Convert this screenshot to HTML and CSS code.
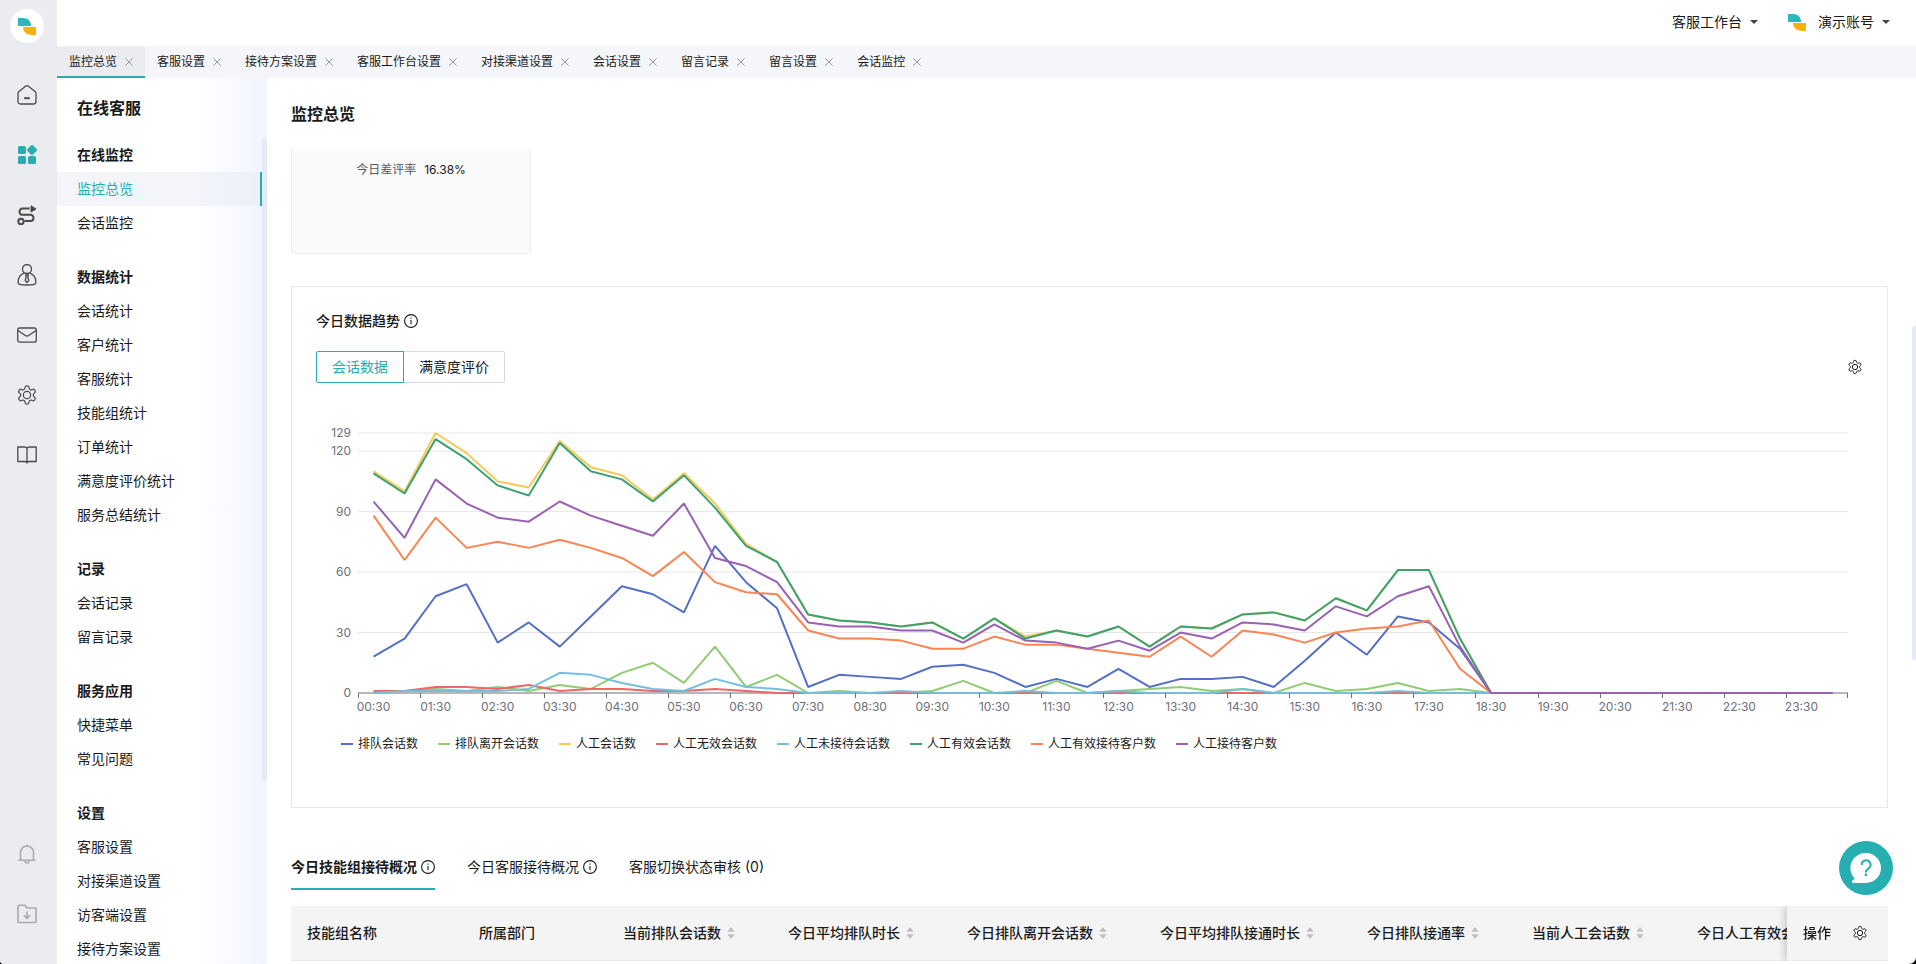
FILE: index.html
```html
<!DOCTYPE html>
<html lang="zh-CN">
<head>
<meta charset="utf-8">
<meta name="viewport" content="width=device-width, initial-scale=1">
<title>监控总览</title>
<link rel="stylesheet" href="styles.css">
</head>
<body>
<svg class="defs" aria-hidden="true">
  <symbol id="logo" viewBox="0 0 18 17"><path d="M0 0h5c5 0 8 3 8 8C11 8 9 8 7 8H0z" fill="#2bb8bb"/><path d="M5 9h13v8h-4c-5 0-9-3-9-8z" fill="#ffae0a"/></symbol>
  <symbol id="gear" viewBox="0 0 24 24"><path d="M12.22 2h-.44a2 2 0 0 0-2 2v.18a2 2 0 0 1-1 1.73l-.43.25a2 2 0 0 1-2 0l-.15-.08a2 2 0 0 0-2.73.73l-.22.38a2 2 0 0 0 .73 2.73l.15.1a2 2 0 0 1 1 1.72v.51a2 2 0 0 1-1 1.74l-.15.09a2 2 0 0 0-.73 2.73l.22.38a2 2 0 0 0 2.73.73l.15-.08a2 2 0 0 1 2 0l.43.25a2 2 0 0 1 1 1.73V20a2 2 0 0 0 2 2h.44a2 2 0 0 0 2-2v-.18a2 2 0 0 1 1-1.73l.43-.25a2 2 0 0 1 2 0l.15.08a2 2 0 0 0 2.73-.73l.22-.39a2 2 0 0 0-.73-2.73l-.15-.08a2 2 0 0 1-1-1.74v-.5a2 2 0 0 1 1-1.74l.15-.09a2 2 0 0 0 .73-2.73l-.22-.38a2 2 0 0 0-2.73-.73l-.15.08a2 2 0 0 1-2 0l-.43-.25a2 2 0 0 1-1-1.73V4a2 2 0 0 0-2-2z"/><circle cx="12" cy="12" r="4"/></symbol>
  <symbol id="info" viewBox="0 0 14 14"><circle cx="7" cy="7" r="6.4"/><path d="M7 6v4.2M7 3.6v1.2"/></symbol>
  <symbol id="close" viewBox="0 0 8 8"><path d="M.3.3l7.400 7.400M7.700.3L.3 7.700"/></symbol>
  <symbol id="sort" viewBox="0 0 8 12"><path d="M4 0l3.700 4.800H.3zM4 12l3.700-4.800H.3z"/></symbol>
  <symbol id="caret" viewBox="0 0 8 4"><path d="M0 0h8L4 4z"/></symbol>
</svg>

<div class="app">
  <nav class="rail" aria-label="主导航">
    <a class="rail-logo" href="#" aria-label="首页"><svg class="logo"><use href="#logo"/></svg></a>
    <a class="rail-link" href="#" aria-label="主页"><svg class="icon" viewBox="0 0 20 20"><path d="M1 8.500Q1 7.200 2 6.500L8.800 1.100Q10 .3 11.200 1.100L18 6.500Q19 7.200 19 8.500V16.500Q19 19 16.500 19H3.500Q1 19 1 16.500z"/><path d="M7.200 13.200h5.600" class="thick"/></svg></a>
    <a class="rail-link active" href="#" aria-label="应用"><svg class="icon solid" viewBox="0 0 20 20"><rect x="1" y="1" width="8" height="8" rx="1.500"/><rect x="1" y="11" width="8" height="8" rx="1.500"/><rect x="11" y="11" width="8" height="8" rx="1.500"/><rect x="11" y="1" width="8" height="8" rx="1.500" transform="rotate(45 15 5)"/></svg></a>
    <a class="rail-link" href="#" aria-label="流程"><svg class="icon heavy" viewBox="0 0 20 20"><path d="M12.500 3.600H5.500a3 3 0 0 0-3 3.200 3 3 0 0 0 3 3H13.500a3 3 0 0 1 3 3.200 3 3 0 0 1-3 3H7.700"/><circle cx="4" cy="16.500" r="2.700"/><path d="M14 .8l5 3.200-5 3z" class="fill"/></svg></a>
    <a class="rail-link" href="#" aria-label="客户"><svg class="icon tall" viewBox="0 0 20 24"><circle cx="10" cy="6" r="4.500"/><path d="M7.300 9.800C3.500 11.500 1.200 15 1.200 18.500v1.700Q2 22 10 22t8.800-1.800V18.500c0-3.500-2.300-7-6.100-8.700M8.600 12h2.800L10.800 14l1 3.500-1.800 2-1.800-2 1-3.500z"/></svg></a>
    <a class="rail-link" href="#" aria-label="邮件"><svg class="icon" viewBox="0 0 20 20"><rect x=".7" y="3" width="18.600" height="14.200" rx="2"/><path d="M1 5.500l7.300 5q1.700 1 3.400 0l7.300-5"/></svg></a>
    <a class="rail-link" href="#" aria-label="设置"><svg class="icon gear"><use href="#gear"/></svg></a>
    <a class="rail-link" href="#" aria-label="知识库"><svg class="icon" viewBox="0 0 20 20"><path d="M10 3.500Q9.500 2 7.500 2H.8v14.500h7Q9.800 16.500 10 18Q10.200 16.500 12.200 16.500h7V2h-6.700Q10.500 2 10 3.500zV18"/></svg></a>
    <a class="rail-link muted push" href="#" aria-label="通知"><svg class="icon" viewBox="0 0 20 20"><path d="M1.500 16.300h17M3.500 16V8.500a6.500 6.500 0 0 1 13 0V16M7.800 17q.5 2 2.200 2t2.200-2M10 .4V2"/></svg></a>
    <a class="rail-link muted last" href="#" aria-label="下载"><svg class="icon" viewBox="0 0 20 20"><path d="M1 18.500V2.500Q1 1.300 2.200 1.300H8l2 2.700h9v14.500zM10 7.500v6.700M6.800 11.200l3.200 3.200 3.200-3.200"/></svg></a>
  </nav>

  <header class="topbar">
    <button class="menu" type="button">客服工作台<svg class="caret"><use href="#caret"/></svg></button>
    <button class="menu" type="button"><svg class="logo"><use href="#logo"/></svg><span>演示账号</span><svg class="caret"><use href="#caret"/></svg></button>
  </header>

  <div class="tabs">
    <div class="tab current"><a href="#">监控总览</a><button type="button" aria-label="关闭"><svg><use href="#close"/></svg></button></div>
    <div class="tab"><a href="#">客服设置</a><button type="button" aria-label="关闭"><svg><use href="#close"/></svg></button></div>
    <div class="tab"><a href="#">接待方案设置</a><button type="button" aria-label="关闭"><svg><use href="#close"/></svg></button></div>
    <div class="tab"><a href="#">客服工作台设置</a><button type="button" aria-label="关闭"><svg><use href="#close"/></svg></button></div>
    <div class="tab"><a href="#">对接渠道设置</a><button type="button" aria-label="关闭"><svg><use href="#close"/></svg></button></div>
    <div class="tab"><a href="#">会话设置</a><button type="button" aria-label="关闭"><svg><use href="#close"/></svg></button></div>
    <div class="tab"><a href="#">留言记录</a><button type="button" aria-label="关闭"><svg><use href="#close"/></svg></button></div>
    <div class="tab"><a href="#">留言设置</a><button type="button" aria-label="关闭"><svg><use href="#close"/></svg></button></div>
    <div class="tab"><a href="#">会话监控</a><button type="button" aria-label="关闭"><svg><use href="#close"/></svg></button></div>
  </div>

  <aside class="side">
    <h2>在线客服</h2>
    <div class="side-groups">
      <section><h3>在线监控</h3><a class="selected" href="#">监控总览</a><a href="#">会话监控</a></section>
      <section><h3>数据统计</h3><a href="#">会话统计</a><a href="#">客户统计</a><a href="#">客服统计</a><a href="#">技能组统计</a><a href="#">订单统计</a><a href="#">满意度评价统计</a><a href="#">服务总结统计</a></section>
      <section><h3>记录</h3><a href="#">会话记录</a><a href="#">留言记录</a></section>
      <section><h3>服务应用</h3><a href="#">快捷菜单</a><a href="#">常见问题</a></section>
      <section><h3>设置</h3><a href="#">客服设置</a><a href="#">对接渠道设置</a><a href="#">访客端设置</a><a href="#">接待方案设置</a></section>
    </div>
    <span class="side-scroll"></span>
  </aside>

  <main class="main">
    <h1>监控总览</h1>
    <div class="stat"><span>今日差评率</span><strong>16.38%</strong></div>

    <section class="panel">
      <h2>今日数据趋势<svg class="info"><use href="#info"/></svg></h2>
      <div class="panel-tools">
        <div class="switch"><button class="on" type="button">会话数据</button><button type="button">满意度评价</button></div>
        <button class="gear-btn" type="button" aria-label="图表设置"><svg><use href="#gear"/></svg></button>
      </div>
      <div class="chart">
        <svg class="y-axis" aria-hidden="true">
          <g text-anchor="end"><text x="35" y="4">129</text><text x="35" y="22">120</text><text x="35" y="83">90</text><text x="35" y="143">60</text><text x="35" y="204">30</text><text x="35" y="264">0</text></g>
        </svg>
        <svg class="plot" viewBox="0 0 48 129" preserveAspectRatio="none" role="img" aria-label="今日数据趋势">
          <g class="grid"><path d="M0 0H48M0 9H48M0 39H48M0 69H48M0 99H48"/></g>
          <path class="axis" d="M0 129H48"/>
          <g class="lines" transform="translate(.5 129) scale(1 -1)">
            <polyline class="c1" points="0,18 1,27 2,48 3,54 4,25 5,35 6,23 7,38 8,53 9,49 10,40 11,73 12,55 13,42 14,3 15,9 16,8 17,7 18,13 19,14 20,10 21,3 22,7 23,3 24,12 25,3 26,7 27,7 28,8 29,3 30,16 31,30 32,19 33,38 34,35 35,22 36,0 47,0"/>
            <polyline class="c2" points="0,0 1,1 2,2 3,1 4,3 5,1 6,4 7,2 8,10 9,15 10,5 11,23 12,3 13,9 14,0 15,1 16,0 17,0 18,1 19,6 20,0 21,0 22,6 23,0 24,1 25,2 26,3 27,1 28,2 29,0 30,5 31,1 32,2 33,5 34,1 35,2 36,0 47,0"/>
            <polyline class="c3" points="0,110 1,100 2,129 3,119 4,105 5,102 6,125 7,112 8,108 9,96 10,109 11,94 12,74 13,65 14,39 15,36 16,35 17,33 18,35 19,27 20,37 21,28 22,31 23,28 24,33 25,23 26,33 27,32 28,39 29,40 30,36 31,47 32,41 33,61 34,61 35,27 36,0 47,0"/>
            <polyline class="c4" points="0,1 1,1 2,3 3,3 4,2 5,4 6,1 7,2 8,2 9,1 10,1 11,2 12,1 13,0 47,0"/>
            <polyline class="c5" points="0,0 1,1 2,1 3,1 4,1 5,2 6,10 7,9 8,5 9,2 10,1 11,7 12,3 13,2 14,0 16,0 17,1 18,0 20,0 21,1 22,0 23,0 24,1 25,0 27,0 28,2 29,0 32,0 33,1 34,0 47,0"/>
            <polyline class="c6" points="0,109 1,99 2,126 3,116 4,103 5,98 6,124 7,110 8,106 9,95 10,108 11,92 12,73 13,65 14,39 15,36 16,35 17,33 18,35 19,27 20,37 21,27 22,31 23,28 24,33 25,23 26,33 27,32 28,39 29,40 30,36 31,47 32,41 33,61 34,61 35,27 36,0 47,0"/>
            <polyline class="c7" points="0,88 1,66 2,87 3,72 4,75 5,72 6,76 7,72 8,67 9,58 10,70 11,55 12,50 13,49 14,31 15,27 16,27 17,26 18,22 19,22 20,28 21,24 22,24 23,22 24,20 25,18 26,28 27,18 28,31 29,29 30,25 31,30 32,32 33,33 34,36 35,12 36,0 47,0"/>
            <polyline class="c8" points="0,95 1,77 2,106 3,94 4,87 5,85 6,95 7,88 8,83 9,78 10,94 11,67 12,63 13,55 14,35 15,33 16,33 17,31 18,31 19,25 20,34 21,26 22,25 23,22 24,26 25,21 26,30 27,27 28,35 29,34 30,31 31,43 32,38 33,48 34,53 35,23 36,0 47,0"/>
          </g>
        </svg>
        <div class="x-axis">
          <div><span>00:30</span></div><div><span>01:30</span></div><div><span>02:30</span></div><div><span>03:30</span></div><div><span>04:30</span></div><div><span>05:30</span></div><div><span>06:30</span></div><div><span>07:30</span></div><div><span>08:30</span></div><div><span>09:30</span></div><div><span>10:30</span></div><div><span>11:30</span></div><div><span>12:30</span></div><div><span>13:30</span></div><div><span>14:30</span></div><div><span>15:30</span></div><div><span>16:30</span></div><div><span>17:30</span></div><div><span>18:30</span></div><div><span>19:30</span></div><div><span>20:30</span></div><div><span>21:30</span></div><div><span>22:30</span></div><div><span>23:30</span></div>
        </div>
      </div>
      <ul class="legend">
        <li class="c1">排队会话数</li><li class="c2">排队离开会话数</li><li class="c3">人工会话数</li><li class="c4">人工无效会话数</li><li class="c5">人工未接待会话数</li><li class="c6">人工有效会话数</li><li class="c7">人工有效接待客户数</li><li class="c8">人工接待客户数</li>
      </ul>
    </section>

    <div class="subtabs">
      <button class="on" type="button">今日技能组接待概况<svg class="info"><use href="#info"/></svg></button>
      <button type="button">今日客服接待概况<svg class="info"><use href="#info"/></svg></button>
      <button type="button">客服切换状态审核 (0)</button>
    </div>
    <div class="table-wrap">
      <table>
        <thead>
          <tr>
            <th class="name">技能组名称</th>
            <th class="dept">所属部门</th>
            <th>当前排队会话数<svg class="sort"><use href="#sort"/></svg></th>
            <th>今日平均排队时长<svg class="sort"><use href="#sort"/></svg></th>
            <th>今日排队离开会话数<svg class="sort"><use href="#sort"/></svg></th>
            <th>今日平均排队接通时长<svg class="sort"><use href="#sort"/></svg></th>
            <th>今日排队接通率<svg class="sort"><use href="#sort"/></svg></th>
            <th>当前人工会话数<svg class="sort"><use href="#sort"/></svg></th>
            <th>今日人工有效会话数<svg class="sort"><use href="#sort"/></svg></th>
            <th class="ops"><div>操作<button class="gear-btn" type="button" aria-label="列设置"><svg><use href="#gear"/></svg></button></div></th>
          </tr>
        </thead>
      </table>
    </div>
    <span class="page-scroll"></span>
  </main>

  <button class="help" type="button" aria-label="帮助"><svg viewBox="0 0 54 54"><path d="M27 12a15 15 0 1 1 0 30H13.500q-1.200-.8-.3-2l2.300-2.600A15 15 0 0 1 27 12z" fill="#fff"/><path d="M22.700 24a4.400 4.400 0 1 1 6.800 3.400q-2.600 1.700-2.600 4" fill="none" stroke="#27aeb0" stroke-width="2"/><circle cx="26.900" cy="33.900" r="1.400" fill="#27aeb0"/></svg></button>
</div>
</body>
</html>
```

FILE: styles.css
```css
:root {
  --teal: #27aeb0;
  --ink: #1a1a1a;
  --line: #e8e8e8;
}

* {
  box-sizing: border-box;
}

html {
  background: #000;
}

body {
  margin: 0;
  color: var(--ink);
  font: 14px/20px Inter, "Noto Sans CJK SC", sans-serif;
}

h1, h2, h3, ul {
  margin: 0;
  padding: 0;
}

a {
  color: inherit;
  text-decoration: none;
}

button {
  padding: 0;
  border: 0;
  background: none;
  color: inherit;
  font: inherit;
  cursor: pointer;
}

svg {
  flex: none;
}

.defs {
  position: absolute;
  width: 0;
  height: 0;
}

.app {
  display: grid;
  grid-template: 46px 32px minmax(0, 1fr) / 57px 210px minmax(0, 1fr);
  height: 100vh;
  overflow: hidden;
  border-radius: 0 0 7px 4px;
  background: #fff;
}

.logo {
  width: 18px;
  height: 17px;
}

/* Icon rail */
.rail {
  grid-row: 1 / -1;
  display: flex;
  flex-direction: column;
  align-items: center;
  padding: 9px 3px 20px 0;
  background: #ebecf0;
}

.rail-logo {
  display: grid;
  place-items: center;
  width: 34px;
  height: 34px;
  margin-bottom: 22px;
  border-radius: 50%;
  background: #fff;
}

.rail-link {
  display: grid;
  place-items: center;
  width: 54px;
  height: 60px;
  color: #4a4a4a;
}

.rail-link.active {
  color: var(--teal);
}

.rail-link.muted {
  color: #a8abb0;
}

.rail-link.push {
  margin-top: auto;
}

.icon {
  width: 20px;
  height: 20px;
  fill: none;
  stroke: currentColor;
  stroke-width: 1.3;
  stroke-linejoin: round;
}

.muted .icon {
  stroke-width: 1.6;
}

.icon.tall {
  height: 24px;
}

.icon.gear {
  width: 22px;
  height: 22px;
}

.icon.heavy {
  stroke-width: 2;
}

.icon .thick {
  stroke-width: 2;
}

.icon.solid {
  fill: currentColor;
  stroke: none;
}

.icon .fill {
  fill: currentColor;
  stroke-width: 1;
}

/* Top bar */
.topbar {
  grid-column: 2 / -1;
  display: flex;
  justify-content: flex-end;
  gap: 30px;
  padding: 0 26px 2px;
}

.menu {
  display: flex;
  align-items: center;
  gap: 8px;
}

.menu .logo {
  margin-right: 4px;
}

.caret {
  width: 8px;
  height: 4px;
  fill: #444;
}

/* Open pages */
.tabs {
  grid-column: 2 / -1;
  display: flex;
  border-top: 1px solid #eef1f5;
  background: #f4f6f9;
  font-size: 12px;
}

.tab {
  display: flex;
  align-items: center;
  gap: 8px;
  padding: 0 12px;
  border-bottom: 2px solid transparent;
}

.tab.current {
  border-color: var(--teal);
  background: #ebecf0;
}

.tab button {
  display: flex;
}

.tab svg {
  width: 8px;
  height: 8px;
  stroke: #999;
}

/* Section menu */
.side {
  position: relative;
  overflow: hidden;
  padding-top: 20px;
  background: linear-gradient(90deg, #fff 66%, #f2f5ff);
}

.side h2 {
  padding: 0 20px;
  font-size: 16px;
  font-weight: 600;
  line-height: 20px;
}

.side-groups {
  display: flex;
  flex-direction: column;
  gap: 20px;
  padding: 20px 5px 0 0;
}

.side section {
  display: flex;
  flex-direction: column;
}

.side h3,
.side section a {
  padding: 0 20px;
  font-size: 14px;
  line-height: 34px;
}

.side h3 {
  font-weight: 600;
}

.side .selected {
  border-right: 2px solid var(--teal);
  background: rgba(226, 230, 240, .4);
  color: var(--teal);
}

.side-scroll {
  position: absolute;
  top: 60px;
  right: 0;
  width: 5px;
  height: 643px;
  border-radius: 3px;
  background: #e4e9f6;
}

/* Content */
.main {
  position: relative;
  overflow: hidden;
  padding: 24px 28px 0 24px;
}

h1 {
  font-size: 16px;
  font-weight: 600;
  line-height: 24px;
}

.stat {
  display: flex;
  justify-content: center;
  gap: 8px;
  width: 240px;
  height: 105px;
  margin-top: 23px;
  padding-top: 11px;
  border: 1px solid #eee;
  border-top: 0;
  border-radius: 0 0 4px 4px;
  background: #fafafa;
  color: #595959;
  font-size: 12px;
}

.stat strong {
  color: var(--ink);
  font-weight: 400;
}

.panel {
  margin-top: 32px;
  padding: 24px 24px 53px;
  border: 1px solid var(--line);
}

.panel h2 {
  display: flex;
  align-items: center;
  gap: 4px;
  font-size: 14px;
  font-weight: 500;
}

.info {
  width: 14px;
  height: 14px;
  fill: none;
  stroke: var(--ink);
  stroke-width: 1.1;
}

.panel-tools {
  display: flex;
  justify-content: space-between;
  align-items: center;
  margin-top: 20px;
}

.switch {
  display: flex;
}

.switch button {
  height: 32px;
  padding: 0 15px;
  border: 1px solid #d9d9d9;
  border-left: 0;
  border-radius: 0 2px 2px 0;
}

.switch .on {
  border: 1px solid var(--teal);
  border-radius: 2px 0 0 2px;
  color: var(--teal);
}

.gear-btn {
  display: flex;
}

.gear-btn svg {
  width: 16px;
  height: 16px;
  fill: none;
  stroke: var(--ink);
  stroke-width: 1.5;
}

.chart {
  display: grid;
  grid-template-columns: 34px minmax(0, 1fr);
  column-gap: 8px;
  margin-top: 50px;
  padding-right: 15px;
  color: #6e7079;
  font-size: 12px;
}

.y-axis {
  width: 34px;
  height: 260px;
  overflow: visible;
  fill: #6e7079;
}

.plot {
  width: 100%;
  height: 260px;
  overflow: visible;
}

.plot path,
.plot polyline {
  fill: none;
  vector-effect: non-scaling-stroke;
}

.grid {
  stroke: #e6e6e6;
  shape-rendering: crispEdges;
}

.axis {
  stroke: #6e7079;
  shape-rendering: crispEdges;
}

.lines {
  stroke-width: 2;
  stroke-linejoin: bevel;
}

.x-axis {
  grid-column: 2;
  display: grid;
  grid-template-columns: repeat(24, minmax(0, 1fr));
  background: linear-gradient(#6e7079, #6e7079) right top / 1px 5px no-repeat;
}

.x-axis div {
  padding-top: 6px;
  background: linear-gradient(#6e7079, #6e7079) left top / 1px 5px no-repeat;
  line-height: 16px;
}

.x-axis span {
  display: flex;
  justify-content: center;
  width: 50%;
}

.c1 { stroke: #5470c6; --key: #5470c6; }
.c2 { stroke: #91cc75; --key: #91cc75; }
.c3 { stroke: #fac858; --key: #fac858; }
.c4 { stroke: #ee6666; --key: #ee6666; }
.c5 { stroke: #73c0de; --key: #73c0de; }
.c6 { stroke: #3ba272; --key: #3ba272; }
.c7 { stroke: #fc8452; --key: #fc8452; }
.c8 { stroke: #9a60b4; --key: #9a60b4; }

.legend {
  display: flex;
  flex-wrap: wrap;
  gap: 20px;
  margin-top: 19px;
  padding-left: 25px;
  list-style: none;
  font-size: 12px;
}

.legend li {
  display: flex;
  align-items: center;
  gap: 5px;
}

.legend li::before {
  width: 12px;
  height: 2px;
  background: var(--key);
  content: "";
}

.subtabs {
  display: flex;
  gap: 32px;
  margin-top: 48px;
}

.subtabs button {
  display: flex;
  align-items: center;
  gap: 4px;
  padding-bottom: 10px;
  border-bottom: 2px solid transparent;
  line-height: 22px;
}

.subtabs .on {
  border-color: var(--teal);
  font-weight: 600;
}

.table-wrap {
  margin-top: 16px;
  overflow: hidden;
}

table {
  width: max-content;
  min-width: 100%;
  border-spacing: 0;
}

th {
  height: 55px;
  padding: 0 37px 0 16px;
  border-bottom: 1px solid #ebebeb;
  background: #f4f4f4;
  font-weight: 500;
  text-align: left;
  white-space: nowrap;
}

th.name {
  padding-right: 86px;
}

th.dept {
  padding-right: 72px;
}

.sort {
  width: 8px;
  height: 12px;
  margin-left: 6px;
  vertical-align: -1px;
  fill: #bfbfbf;
}

th.ops {
  position: sticky;
  right: 0;
  padding: 0 20px 0 16px;
  box-shadow: -2px 0 8px rgba(0, 0, 0, .2);
}

.ops div {
  display: flex;
  align-items: center;
  gap: 21px;
}

.page-scroll {
  position: absolute;
  top: 248px;
  right: 0;
  width: 4px;
  height: 334px;
  border-radius: 3px 0 0 3px;
  background: #e3eaf6;
}

.help {
  position: fixed;
  right: 23px;
  bottom: 69px;
  width: 54px;
  height: 54px;
  border-radius: 50%;
  background: var(--teal);
}

.help svg {
  display: block;
}
```
